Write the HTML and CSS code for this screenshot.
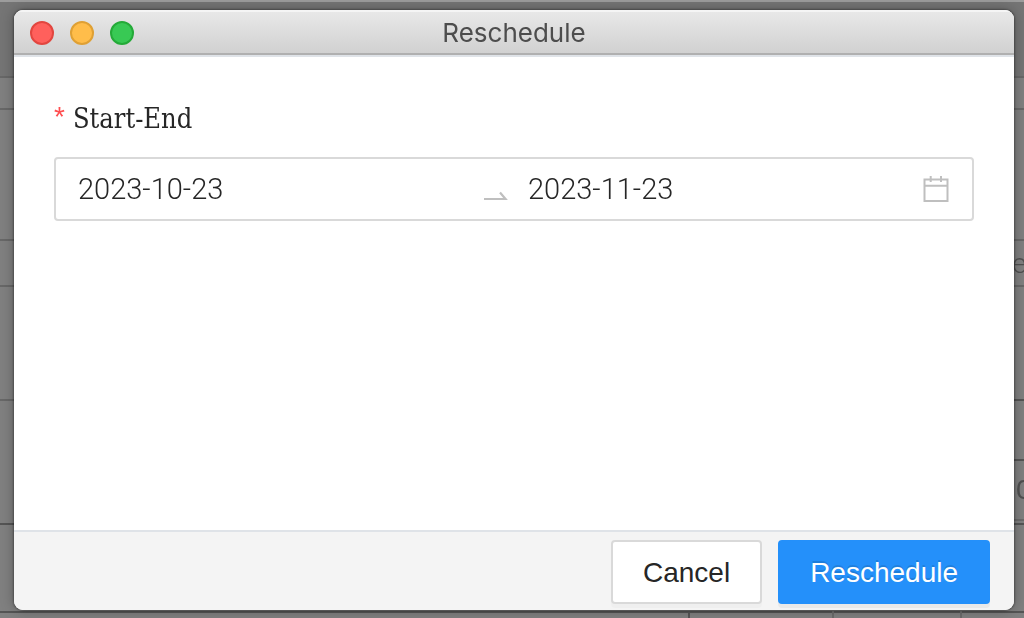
FILE: index.html
```html
<!DOCTYPE html>
<html lang="en">
<head>
<meta charset="utf-8">
<title>Reschedule</title>
<link rel="stylesheet" href="styles.css">
</head>
<body>
<div class="backdrop" aria-hidden="true">
  <svg class="grid" width="100%" height="100%">
    <rect width="100%" height="77" fill="#757575"/>
    <rect width="100%" height="2" fill="#9c9c9c"/>
    <g fill="#686868">
      <rect y="76" width="100%" height="2"/>
      <rect y="108" width="100%" height="2"/>
      <rect y="239" width="100%" height="2"/>
      <rect y="285" width="100%" height="2"/>
      <rect y="399" width="100%" height="2"/>
    </g>
    <g fill="#555">
      <rect x="50%" y="399" width="50%" height="2"/>
      <rect x="50%" y="459" width="50%" height="2"/>
      <rect y="523" width="100%" height="2"/>
      <rect y="611" width="100%" height="2"/>
      <rect x="688" y="611" width="2" height="7"/>
    </g>
    <g fill="#6b6b6b">
      <rect x="50%" y="519" width="50%" height="2"/>
      <rect x="832" y="611" width="2" height="7"/>
      <rect x="960" y="611" width="2" height="7"/>
    </g>
  </svg>
  <span class="peek peek-light">e</span>
  <span class="peek peek-dark">0</span>
</div>
<main class="window">
  <header class="titlebar">
    <div class="lights">
      <button class="light close" aria-label="Close"></button>
      <button class="light minimize" aria-label="Minimize"></button>
      <button class="light maximize" aria-label="Zoom"></button>
    </div>
    <h1 class="title">Reschedule</h1>
  </header>
  <form class="form" id="reschedule">
    <label class="label" for="start"><span class="required">*</span>Start-End</label>
    <div class="range">
      <input class="date" id="start" type="text" value="2023-10-23">
      <svg class="arrow" width="24" height="24" viewBox="0 0 24 24"><path d="M0 22h21.5L16 15.5" fill="none" stroke="#bfbfbf" stroke-width="2.2"/></svg>
      <input class="date" type="text" value="2023-11-23" aria-label="End">
      <svg class="calendar" width="28" height="28" viewBox="0 0 28 28" fill="none" stroke="#bfbfbf" stroke-width="2"><path d="M2.5 4.5h23v21.5h-23zM2.5 10.7h23"/><path d="M8.7 1v6M19 1v6"/></svg>
    </div>
  </form>
  <footer class="footer">
    <button class="button" type="button">Cancel</button>
    <button class="button primary" type="submit" form="reschedule">Reschedule</button>
  </footer>
</main>
</body>
</html>
```
FILE: styles.css
```css
* { box-sizing: border-box; }

body {
  margin: 0;
  height: 100vh;
  padding: 10px 10px 8px 14px;
  background: #808080;
  font-family: "Liberation Sans", Arial, sans-serif;
  font-size: 28px;
  color: #262626;
  overflow: hidden;
}

.backdrop {
  position: fixed;
  inset: 0;
}

.grid { display: block; }

.peek {
  position: absolute;
  color: #505050;
  line-height: 32px;
}

.peek-light {
  left: 1012px;
  top: 248px;
  font-family: Roboto, sans-serif;
  font-weight: 300;
}

.peek-dark {
  left: 1016px;
  top: 474px;
}

.window {
  position: relative;
  display: flex;
  flex-direction: column;
  height: 100%;
  border-radius: 9px;
  overflow: hidden;
  background: #fff;
  box-shadow: 0 0 2px 1px rgba(0, 0, 0, .3), 0 0 14px rgba(0, 0, 0, .3);
}

.titlebar {
  display: grid;
  grid-template-columns: 1fr auto 1fr;
  align-items: center;
  height: 45px;
  padding: 2px 16px 0;
  background: linear-gradient(#e9e9e9, #d1d1d1);
  border-bottom: 2px solid #b0b0b0;
  box-shadow: inset 0 2px #f5f5f5, 0 2px #dfe3e8;
}

.lights {
  display: flex;
  gap: 16px;
}

.light {
  width: 24px;
  height: 24px;
  padding: 0;
  border: 2px solid;
  border-radius: 50%;
}

.close { background: #ff605c; border-color: #e2463f; }
.minimize { background: #ffbd4a; border-color: #dfa034; }
.maximize { background: #38c954; border-color: #24aa38; }

.title {
  margin: 0;
  font-family: Inter, sans-serif;
  font-size: 26px;
  font-weight: 400;
  line-height: 30px;
  color: #4d4d4d;
}

.form {
  flex: 1;
  padding: 44px 40px;
}

.label {
  display: flex;
  gap: 8px;
  margin-bottom: 18px;
  font-family: "DejaVu Serif Condensed", "DejaVu Serif", Georgia, serif;
  font-size: 27px;
  line-height: 40px;
}

.required {
  color: #ff4d4f;
  font-family: "Liberation Sans", sans-serif;
  font-size: 28px;
  line-height: 36px;
}

.range {
  display: flex;
  align-items: center;
  height: 64px;
  padding: 0 22px;
  border: 2px solid #d9d9d9;
  border-radius: 4px;
}

.date {
  flex: 1;
  min-width: 0;
  padding: 0;
  border: 0;
  outline: 0;
  background: none;
  color: #262626;
  font-family: Roboto, sans-serif;
  font-size: 29px;
  font-weight: 300;
}

.arrow {
  flex: none;
  margin: 0 20px 0 12px;
}

.calendar { flex: none; }

.footer {
  display: flex;
  justify-content: flex-end;
  gap: 16px;
  padding: 8px 24px 6px;
  background: #f4f4f4;
  border-top: 2px solid #dfe3e8;
}

.button {
  height: 64px;
  padding: 2px 30px 0;
  border: 2px solid #d9d9d9;
  border-radius: 4px;
  background: #fff;
  box-shadow: 0 4px rgba(0, 0, 0, .02);
  color: #262626;
  font: inherit;
}

.primary {
  border-color: #2490fa;
  background: #2490fa;
  color: #fff;
  box-shadow: 0 4px rgba(0, 0, 0, .045);
  text-shadow: 0 -2px rgba(0, 0, 0, .12);
}
```
